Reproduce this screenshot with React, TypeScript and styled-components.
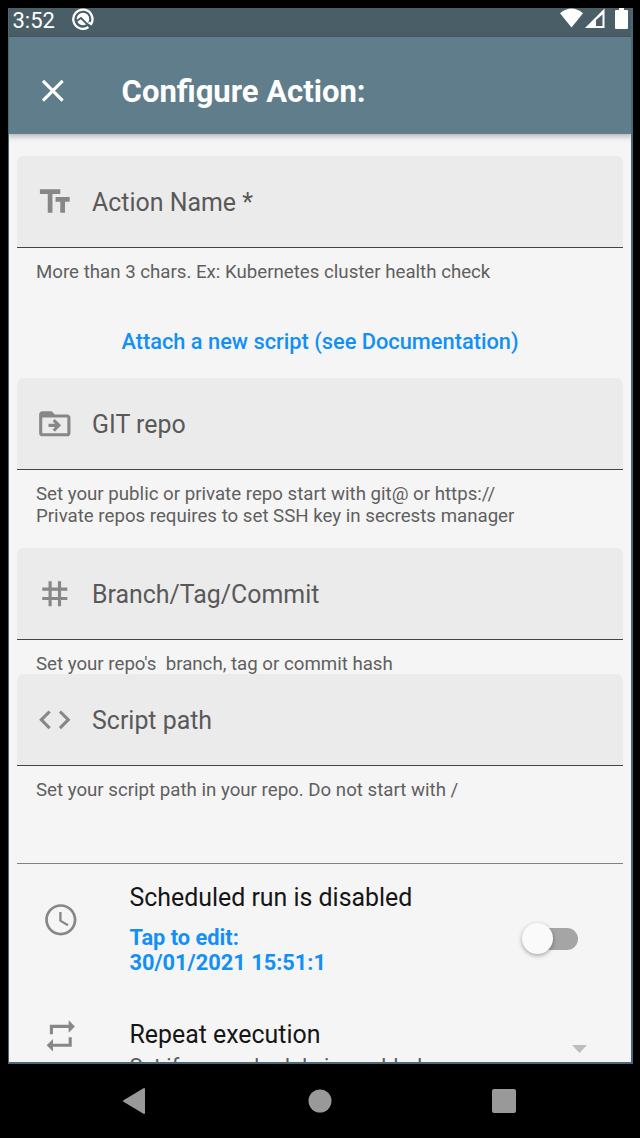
import React from 'react';
import styled, { createGlobalStyle } from 'styled-components';

const GlobalStyle = createGlobalStyle`
  * { box-sizing: border-box; }
  body {
    margin: 0;
    background: #000;
    font-family: Roboto, "Liberation Sans", sans-serif;
  }
`;

const Device = styled.div`
  width: 640px;
  height: 1138px;
  padding: 8px 7px 0 8px;
  display: flex;
  flex-direction: column;
  background: #000;
  overflow: hidden;
`;

const Screen = styled.div`
  height: 1056px;
  display: flex;
  flex-direction: column;
  border: solid #4a6877;
  border-width: 0 2px 2px 1.5px;
  background: #f5f5f5;
  overflow: hidden;
`;

const StatusBar = styled.div`
  flex: none;
  height: 29px;
  margin: 0 -2px;
  padding: 0 4px 0 5.5px;
  display: flex;
  align-items: flex-start;
  background: #4a5e68;
  color: #fff;
`;

const Time = styled.span`
  width: 59.5px;
  padding-top: 1px;
  font-size: 22px;
  line-height: 24px;
`;

const StatusIcons = styled.div`
  margin-left: auto;
  display: flex;
`;

const AppBar = styled.header`
  flex: none;
  position: relative;
  height: 97px;
  margin: 0 -2px;
  padding: 10px 0 0 27px;
  display: flex;
  align-items: center;
  background: #607d8b;
  color: #fff;
  box-shadow: 0 2px 6px rgba(0, 0, 0, 0.3);
`;

const Title = styled.h1`
  margin: 0 0 0 50px;
  padding-top: 2px;
  font-size: 31px;
  font-weight: 700;
  line-height: 36px;
`;

const Content = styled.main`
  flex: 1;
  min-height: 0;
  padding: 22px 8px 0;
  overflow: hidden;
`;

const Field = styled.div<{ $gap?: number }>`
  margin-bottom: ${(p) => p.$gap ?? 0}px;
`;

const FieldBox = styled.div`
  height: 92px;
  padding-left: 18.5px;
  display: flex;
  align-items: center;
  border-radius: 6px 6px 0 0;
  border-bottom: 1.5px solid #444;
  background: #ebebeb;
  color: #595959;
`;

const Label = styled.span`
  margin-left: 19px;
  padding-top: 1px;
  font-size: 24.9px;
`;

const Helper = styled.p`
  margin: 0;
  padding: 13px 0 0 19px;
  margin-bottom: -1px;
  font-size: 18.68px;
  line-height: 22px;
  white-space: pre-wrap;
  color: #5f5f5f;
`;

const LinkRow = styled.div`
  height: 96px;
  padding-top: 23px;
  display: flex;
  justify-content: center;
`;

const LinkText = styled.a<{ $bold?: boolean }>`
  font-size: 21.8px;
  font-weight: ${(p) => (p.$bold ? 700 : 500)};
  line-height: ${(p) => (p.$bold ? 25 : 74)}px;
  color: #1290f5;
  white-space: pre-line;
`;

const Divider = styled.hr`
  height: 1px;
  margin: 0;
  border: 0;
  background: #828282;
`;

const Row = styled.section`
  padding: 0 45px 0 25px;
  display: flex;
`;

const RowIcon = styled.div<{ $top: number }>`
  width: 87.5px;
  padding-top: ${(p) => p.$top}px;
`;

const RowText = styled.div<{ $height: number }>`
  flex: 1;
  height: ${(p) => p.$height}px;
  padding-top: 19px;
  display: flex;
  flex-direction: column;
`;

const RowTitle = styled.span<{ $gap: number }>`
  margin-bottom: ${(p) => p.$gap}px;
  font-size: 24.9px;
  line-height: 30px;
  color: #161616;
`;

const RowSub = styled.span`
  font-size: 21.7px;
  line-height: 26px;
  color: #5c5c5c;
`;

const Track = styled.div`
  width: 48px;
  height: 22px;
  margin-top: 63.5px;
  display: flex;
  align-items: center;
  border-radius: 11px;
  background: #a5a5a5;
`;

const Thumb = styled.div`
  flex: none;
  width: 31px;
  height: 31px;
  margin-left: -8px;
  border-radius: 50%;
  background: #fafafa;
  box-shadow: 0 1.5px 4px rgba(0, 0, 0, 0.35);
`;

const Caret = styled.div`
  width: 15px;
  height: 8px;
  margin: 44px -9px 0 0;
  background: #bdbdbd;
  clip-path: polygon(0 0, 100% 0, 50% 100%);
`;

const NavBar = styled.nav`
  height: 74px;
  padding: 0 117px 0 114px;
  display: flex;
  align-items: center;
  justify-content: space-between;
`;

const Glyph = ({ d, color = '#878787' }: { d: string; color?: string }) => (
  <svg width="37.6" height="37.6" viewBox="0 0 24 24" fill={color}>
    <path d={d} />
  </svg>
);

const icons = {
  close:
    'M19 6.41L17.59 5 12 10.59 6.41 5 5 6.41 10.59 12 5 17.59 6.41 19 12 13.41 17.59 19 19 17.59 13.41 12z',
  text: 'M2.5 4v3h5v12h3V7h5V4h-13zm19 5h-9v3h3v7h3v-7h3V9z',
  folder:
    'M20 6h-8l-2-2H4c-1.1 0-2 .9-2 2v12c0 1.1.9 2 2 2h16c1.1 0 2-.9 2-2V8c0-1.1-.9-2-2-2zm0 12H4V8h16v10zM8 12h4.2l-1.6-1.6L12 9l4 4-4 4-1.4-1.4L12.2 14H8z',
  tag: 'M20 10V8h-4V4h-2v4h-4V4H8v4H4v2h4v4H4v2h4v4h2v-4h4v4h2v-4h4v-2h-4v-4h4zm-6 4h-4v-4h4v4z',
  code: 'M9.4 16.6L4.8 12l4.6-4.6L8 6l-6 6 6 6 1.4-1.4zm5.2 0l4.6-4.6-4.6-4.6L16 6l6 6-6 6-1.4-1.4z',
  clock:
    'M11.99 2C6.47 2 2 6.48 2 12s4.47 10 9.99 10C17.52 22 22 17.52 22 12S17.52 2 11.99 2zM12 20.250c-4.560 0-8.250-3.690-8.250-8.250s3.690-8.250 8.250-8.250 8.250 3.690 8.250 8.250-3.690 8.250-8.250 8.250zm.5-13.250H11v6l5.25 3.15.75-1.23-4.5-2.67z',
  repeat: 'M7 7h10v3l4-4-4-4v3H5v6h2V7zm10 10H7v-3l-4 4 4 4v-3h12v-6h-2v4z',
};

type FormFieldProps = { icon: string; label: string; helper: string; gap?: number };

const FormField = ({ icon, label, helper, gap }: FormFieldProps) => (
  <Field $gap={gap}>
    <FieldBox>
      <Glyph d={icon} />
      <Label>{label}</Label>
    </FieldBox>
    <Helper>{helper}</Helper>
  </Field>
);

export default function App() {
  return (
    <>
      <GlobalStyle />
      <Device>
        <Screen>
          <StatusBar>
            <Time>3:52</Time>
            <svg width="22" height="22" viewBox="0 0 22 22" fill="none">
              <path d="M16.500 19A9.600 9.600 0 1 1 19.200 16L16.500 14.500" stroke="#fff" strokeWidth="2.300" />
              <circle cx="11" cy="11" r="6.200" fill="#fff" />
              <path d="M4 13.500L9 10l8.500 8.500" stroke="#4a5e68" strokeWidth="1.800" />
            </svg>
            <StatusIcons>
              <svg width="70" height="22" viewBox="0 0 70 22" fill="#fff">
                <path d="M1 5.200Q12.500-4 24 5.200L12.500 19.500z" />
                <path fillRule="evenodd" d="M26 20L45.500.5V20zM37 18h6.500V6.500L37 12z" />
                <path d="M60 0h5v2h3q1 0 1 1v17q0 1-1 1H57q-1 0-1-1V3q0-1 1-1h3z" />
              </svg>
            </StatusIcons>
          </StatusBar>
          <AppBar>
            <Glyph d={icons.close} color="#fff" />
            <Title>Configure Action:</Title>
          </AppBar>
          <Content>
            <FormField
              icon={icons.text}
              label="Action Name *"
              helper="More than 3 chars. Ex: Kubernetes cluster health check"
            />
            <LinkRow>
              <LinkText>Attach a new script (see Documentation)</LinkText>
            </LinkRow>
            <FormField
              icon={icons.folder}
              label="GIT repo"
              helper={'Set your public or private repo start with git@ or https://\nPrivate repos requires to set SSH key in secrests manager'}
              gap={22}
            />
            <FormField
              icon={icons.tag}
              label="Branch/Tag/Commit"
              helper="Set your repo's  branch, tag or commit hash"
            />
            <FormField
              icon={icons.code}
              label="Script path"
              helper="Set your script path in your repo. Do not start with /"
              gap={63}
            />
            <Divider />
            <Row>
              <RowIcon $top={36.5}>
                <Glyph d={icons.clock} />
              </RowIcon>
              <RowText $height={137}>
                <RowTitle $gap={12}>Scheduled run is disabled</RowTitle>
                <LinkText $bold>{'Tap to edit:\n30/01/2021 15:51:1'}</LinkText>
              </RowText>
              <Track>
                <Thumb />
              </Track>
            </Row>
            <Row>
              <RowIcon $top={16}>
                <Glyph d={icons.repeat} />
              </RowIcon>
              <RowText $height={80}>
                <RowTitle $gap={4}>Repeat execution</RowTitle>
                <RowSub>Set if your schedule is enabled</RowSub>
              </RowText>
              <Caret />
            </Row>
          </Content>
        </Screen>
        <NavBar>
          <svg width="24" height="28" viewBox="0 0 24 28">
            <path d="M22 2v24L2 14z" fill="#999" stroke="#999" strokeWidth="2" strokeLinejoin="round" />
          </svg>
          <svg width="26" height="24" viewBox="0 0 26 24">
            <circle cx="14" cy="12" r="11.500" fill="#999" />
          </svg>
          <svg width="24" height="24" viewBox="0 0 24 24">
            <rect width="24" height="24" rx="2" fill="#999" />
          </svg>
        </NavBar>
      </Device>
    </>
  );
}
